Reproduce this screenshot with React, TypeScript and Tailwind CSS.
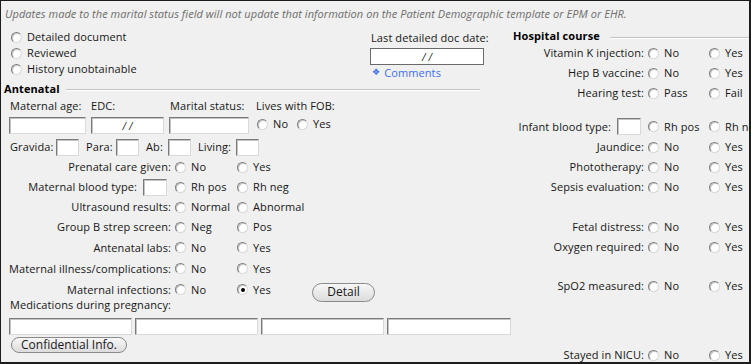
import React from "react";

const Radio = ({ checked = false }: { checked?: boolean }) => (
  <span className="inline-flex items-center justify-center w-[11px] h-[11px] shrink-0 rounded-full bg-white border border-t-[#7d7d7d] border-l-[#7d7d7d] border-r-[#d8d8d8] border-b-[#d8d8d8] shadow-[inset_1px_1px_0_#c8c8c8]">
    {checked && <span className="block w-[4px] h-[4px] rounded-full bg-black" />}
  </span>
);

const Opt = ({
  label,
  checked = false,
  w = "",
}: {
  label: string;
  checked?: boolean;
  w?: string;
}) => (
  <div className={`flex items-center whitespace-nowrap ${w}`}>
    <Radio checked={checked} />
    <span className="ml-[5px]">{label}</span>
  </div>
);

const Slashes = () => (
  <span className="italic text-[10px]">
    /<span className="ml-[3px]">/</span>
  </span>
);

const Field = ({ className = "", date = false }: { className?: string; date?: boolean }) => (
  <div
    className={`h-[17px] shrink-0 bg-white border border-t-[#7a7a7a] border-l-[#7a7a7a] border-r-[#d9d9d9] border-b-[#d9d9d9] shadow-[inset_1px_1px_0_#c4c4c4] flex items-center justify-center ${className}`}
  >
    {date && <Slashes />}
  </div>
);

const LRow = ({
  label,
  a = "No",
  b = "Yes",
  checkedB = false,
  h = "h-[20px]",
  field = false,
  children,
}: {
  label: string;
  a?: string;
  b?: string;
  checkedB?: boolean;
  h?: string;
  field?: boolean;
  children?: React.ReactNode;
}) => (
  <div className={`flex items-center whitespace-nowrap ${h}`}>
    <div className="w-[170px] shrink-0 flex justify-end items-center">
      <span>{label}</span>
      {field && <Field className="w-[24px] ml-[6px] mr-[4px]" />}
    </div>
    <div className="ml-[4px] flex items-center">
      <Opt label={a} w="w-[62px]" />
      <Opt label={b} checked={checkedB} w="w-[62px]" />
    </div>
    {children}
  </div>
);

const RRow = ({
  label,
  a = "No",
  b = "Yes",
  h = "h-[20px]",
  field = false,
}: {
  label: string;
  a?: string;
  b?: string;
  h?: string;
  field?: boolean;
}) => (
  <div className={`flex items-center whitespace-nowrap ${h}`}>
    <div className="w-[132px] shrink-0 flex justify-end items-center">
      <span>{label}</span>
      {field && <Field className="w-[24px] ml-[6px] mr-[3px]" />}
    </div>
    <div className="ml-[4px] flex items-center">
      <Opt label={a} w="w-[61px]" />
      <Opt label={b} />
    </div>
  </div>
);

const Btn = ({ label, className = "" }: { label: string; className?: string }) => (
  <div
    className={`shrink-0 flex items-center justify-center rounded-full border border-[#8a8a8a] bg-gradient-to-b from-[#f7f7f7] to-[#dcdcdc] text-[12px] text-[#1a1a1a] tracking-normal ${className}`}
  >
    {label}
  </div>
);

export default function App() {
  return (
    <div className="w-[751px] h-[364px] overflow-hidden bg-[#f0f0f0] border-l border-t border-r-2 border-b-2 border-[#1c1c1c] font-['Open_Sans',sans-serif] text-[11px] text-[#161616] leading-[14px] tracking-[0.1px]">
      {/* notice */}
      <div className="h-[26px] flex items-center pl-[4px] italic text-[#6c6c6c] whitespace-nowrap tracking-[0.05px]">
        Updates made to the marital status field will not update that information on the Patient Demographic template or EPM or EHR.
      </div>

      <div className="flex">
        {/* LEFT COLUMN */}
        <div className="w-[511px] shrink-0">
          {/* top block */}
          <div className="h-[53px] flex">
            <div className="w-[369px] pl-[10px] pt-[2px]">
              <div className="h-[16px] flex items-center">
                <Opt label="Detailed document" />
              </div>
              <div className="h-[16px] flex items-center">
                <Opt label="Reviewed" />
              </div>
              <div className="h-[16px] flex items-center">
                <Opt label="History unobtainable" />
              </div>
            </div>
            <div className="w-[115px] pt-[3px]">
              <div className="h-[16px] flex items-center pl-[1px] whitespace-nowrap">Last detailed doc date:</div>
              <div className="mt-[2px] h-[17px] w-[114px] bg-white border border-[#6a6a6a] flex items-center justify-center">
                <Slashes />
              </div>
              <div className="h-[15px] flex items-center pl-[2px] text-[#3d6ef0]">
                <span className="text-[9px] font-['DejaVu_Sans'] leading-none">❖</span>
                <span className="ml-[4px]">Comments</span>
              </div>
            </div>
          </div>

          {/* Antenatal header */}
          <div className="h-[18px] flex items-center pl-[3px] mr-[32px]">
            <span className="font-bold text-black">Antenatal</span>
            <div className="flex-1 ml-[6px] mt-[1px] border-t border-[#c2c2c2] shadow-[0_1px_0_#ffffff]" />
          </div>

          {/* label row */}
          <div className="h-[16px] grid grid-cols-[82px_78px_87px_auto] ml-[8px] items-center whitespace-nowrap">
            <span className="pl-[1px]">Maternal age:</span>
            <span>EDC:</span>
            <span className="pl-[1px]">Marital status:</span>
            <span>Lives with FOB:</span>
          </div>
          <div className="mt-[3px] h-[17px] grid grid-cols-[82px_78px_87px_auto] ml-[8px]">
            <Field className="w-[77px]" />
            <Field className="w-[73px]" date />
            <Field className="w-[80px]" />
            <div className="flex items-center pb-[5px] pl-[1px]">
              <Opt label="No" w="w-[40px]" />
              <Opt label="Yes" />
            </div>
          </div>

          {/* gravida row */}
          <div className="mt-[3px] h-[20px] flex items-center pl-[9px] whitespace-nowrap">
            <span className="w-[46px]">Gravida:</span>
            <Field className="w-[23px]" />
            <span className="ml-[7px] w-[30px]">Para:</span>
            <Field className="w-[23px]" />
            <span className="ml-[7px] w-[22px]">Ab:</span>
            <Field className="w-[23px]" />
            <span className="ml-[7px] w-[38px]">Living:</span>
            <Field className="w-[23px]" />
          </div>

          <LRow label="Prenatal care given:" />
          <LRow label="Maternal blood type:" a="Rh pos" b="Rh neg" field />
          <LRow label="Ultrasound results:" a="Normal" b="Abnormal" />
          <LRow label="Group B strep screen:" a="Neg" b="Pos" />
          <LRow label="Antenatal labs:" h="h-[21px]" />
          <LRow label="Maternal illness/complications:" h="h-[21px]" />
          <LRow label="Maternal infections:" h="h-[21px]" checkedB>
            <Btn label="Detail" className="ml-[13px] mt-[5px] w-[63px] h-[19px]" />
          </LRow>

          <div className="h-[9px] flex items-center pl-[9px] whitespace-nowrap">Medications during pregnancy:</div>
          <div className="mt-[9px] flex gap-[3px] pl-[8px]">
            <Field className="w-[123px] h-[16px]" />
            <Field className="w-[123px] h-[16px]" />
            <Field className="w-[123px] h-[16px]" />
            <Field className="w-[124px] h-[16px]" />
          </div>
          <div className="mt-[2px] pl-[10px]">
            <Btn label="Confidential Info." className="w-[116px] h-[16px]" />
          </div>
        </div>

        {/* RIGHT COLUMN */}
        <div className="flex-1 min-w-0">
          <div className="mt-[2px] h-[14px] flex items-center pl-[1px]">
            <span className="font-bold text-black whitespace-nowrap">Hospital course</span>
            <div className="flex-1 ml-[10px] mt-[2px] border-t border-[#c2c2c2] shadow-[0_1px_0_#ffffff]" />
          </div>
          <RRow label="Vitamin K injection:" />
          <RRow label="Hep B vaccine:" />
          <RRow label="Hearing test:" a="Pass" b="Fail" />
          <div className="h-[13px]" />
          <RRow label="Infant blood type:" a="Rh pos" b="Rh neg" h="h-[21px]" field />
          <RRow label="Jaundice:" />
          <RRow label="Phototherapy:" />
          <RRow label="Sepsis evaluation:" />
          <div className="h-[20px]" />
          <RRow label="Fetal distress:" />
          <RRow label="Oxygen required:" />
          <div className="h-[19px]" />
          <RRow label="SpO2 measured:" />
          <div className="h-[50px]" />
          <RRow label="Stayed in NICU:" h="h-[18px]" />
        </div>
      </div>
    </div>
  );
}
